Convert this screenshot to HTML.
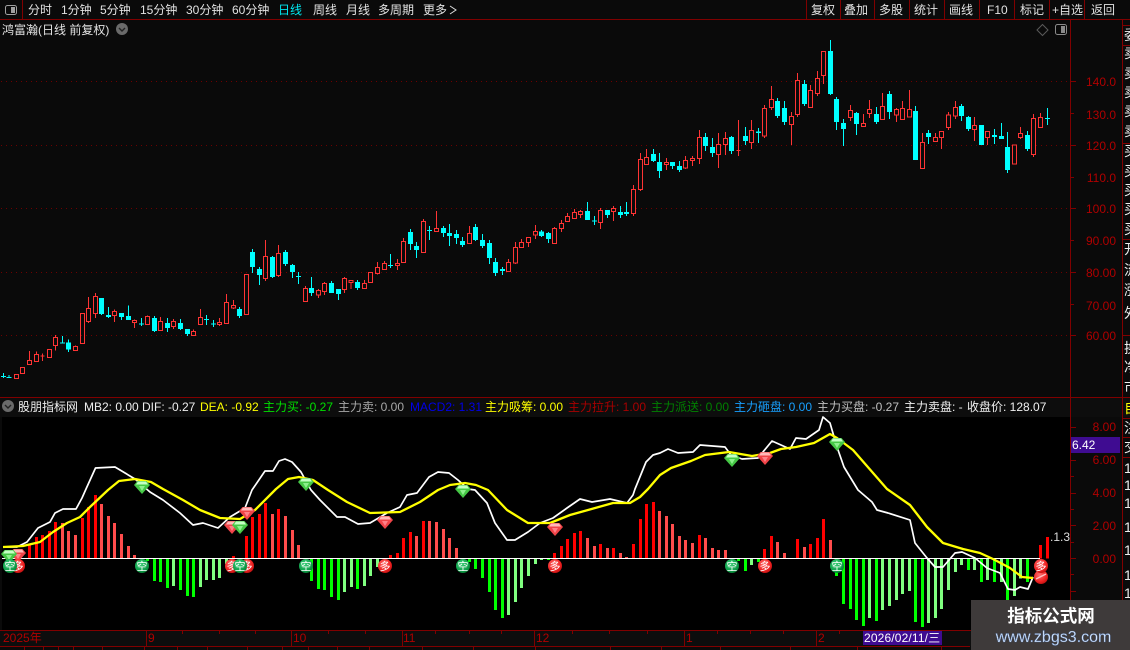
<!DOCTYPE html>
<html><head><meta charset="utf-8"><title>K线</title>
<style>
html,body{margin:0;padding:0;background:#0a0a0a;width:1130px;height:650px;overflow:hidden}
svg{display:block;position:absolute;left:0;top:0}
text{font-family:"Liberation Sans","WenQuanYi Zen Hei","Noto Sans CJK SC",sans-serif;font-size:12px;white-space:pre}
.tb text{fill:#e2e2e2}
.ax text{fill:#b00000;text-anchor:end}
.sd text{fill:#eee;font-size:14px}
.ball{font-size:11px;fill:#fff;text-anchor:middle}
</style></head><body>
<svg width="1130" height="650" viewBox="0 0 1130 650" xmlns="http://www.w3.org/2000/svg">
<defs>
<radialGradient id="gr" cx=".4" cy=".35" r=".7"><stop offset="0" stop-color="#3ed07a"/><stop offset=".7" stop-color="#0fa04a"/><stop offset="1" stop-color="#067a30"/></radialGradient>
<radialGradient id="rd" cx=".4" cy=".35" r=".7"><stop offset="0" stop-color="#ff7070"/><stop offset=".7" stop-color="#ee2020"/><stop offset="1" stop-color="#b81010"/></radialGradient>
<g id="gg"><path d="M-4.5 -6H4.5L8 -2L0 7L-8 -2Z" fill="#46c846"/><path d="M-4 -5.5H4L6 -2.5H-6Z" fill="#c4ffc4"/><path d="M-3 -1H3L0 4Z" fill="#8cf08c"/></g>
<g id="rg"><path d="M-4.5 -6H4.5L8 -2L0 7L-8 -2Z" fill="#f04448"/><path d="M-4 -5.5H4L6 -2.5H-6Z" fill="#ffb8b8"/><path d="M-3 -1H3L0 4Z" fill="#ff8088"/></g>
<clipPath id="sc"><rect x="1123" y="20" width="7" height="630"/></clipPath>
</defs>

<rect width="1130" height="650" fill="#0a0a0a"/>

<!-- toolbar -->
<g stroke="#800000" fill="none" shape-rendering="crispEdges">
<path d="M0 19.5H1130M22.5 0V19M806.5 0V19M840.5 0V19M874.5 0V19M909.5 0V19M944.5 0V19M979.5 0V19M1014.5 0V19M1049.5 0V19M1084.5 0V19"/>
</g>
<rect x="5.5" y="5.5" width="11" height="9" rx="2" fill="none" stroke="#a0a0a0"/><rect x="11" y="7" width="4" height="6" fill="#a0a0a0"/>
<g class="tb">
<text x="28" y="14">分时</text><text x="61" y="14">1分钟</text><text x="100" y="14">5分钟</text><text x="140" y="14">15分钟</text><text x="186" y="14">30分钟</text><text x="232" y="14">60分钟</text>
<text x="278" y="14" style="fill:#00e8f0">日线</text><text x="313" y="14">周线</text><text x="346" y="14">月线</text><text x="378" y="14">多周期</text><text x="423" y="14">更多</text>
<text x="811" y="14">复权</text><text x="844" y="14">叠加</text><text x="879" y="14">多股</text><text x="914" y="14">统计</text><text x="949" y="14">画线</text><text x="987" y="14">F10</text><text x="1020" y="14">标记</text><text x="1052" y="14">+自选</text><text x="1091" y="14">返回</text>
</g>
<path d="M450 6L456 10L450 14" fill="none" stroke="#ddd"/>

<!-- title -->
<text x="2" y="34" fill="#e2e2e2">鸿富瀚(日线 前复权)</text>
<circle cx="122" cy="29" r="6" fill="#6a6a6a"/><path d="M119 28L122 31L125 28" fill="none" stroke="#222" stroke-width="1.4"/>
<path d="M1042.5 24.5L1048 30L1042.5 35.5L1037 30Z" fill="none" stroke="#5a5a5a"/>
<rect x="1055.5" y="24.5" width="11" height="10" rx="2" fill="none" stroke="#8a8a8a"/><rect x="1061" y="26" width="4" height="7" fill="#8a8a8a"/>

<!-- grid -->
<g stroke="#6e0000" stroke-dasharray="1 4" shape-rendering="crispEdges">
<path d="M1 81.5H1070M1 145.5H1070M1 208.5H1070M1 272.5H1070M1 335.5H1070"/>
</g>

<!-- candles -->
<g shape-rendering="crispEdges" fill="none">
<g transform="matrix(.33333 0 0 .33333 0 200)">
<path stroke="#00ffff" stroke-width="3" d="M10 519V534M27 525V533M187 408V430M205 418V456M304 294V345M325 321V354M364 339V360M385 316V360M424 354V378M463 348V396M502 354V396M541 357V390M562 387V408M619 345V375M640 360V381M718 321V354M757 147V219M778 201V255M817 168V234M856 150V198M877 192V234M895 216V252M934 231V288M994 243V279M1015 267V300"/>
<path stroke="#00ffff" stroke-width="15" d="M10 528V531M27 531V534M187 427V430M205 427V449M304 294V342M325 345V351M364 339V351M385 348V360M424 370V373M463 354V393M502 369V384M541 369V387M562 387V402M619 357V360M640 370V373M718 327V348M757 156V201M778 207V225M817 171V231M856 156V192M877 195V216M895 228V231M934 264V279M994 249V279M1015 267V282"/>
<path stroke="#ff3434" stroke-width="3" d="M43 523H55V536H43ZM61 502H73V521H61ZM88 453V481M82 481H94V494H82ZM109 454V463M103 463H115V485H103ZM127 460V483M121 468H133M142 448H154V473H142ZM166 405V412M160 412H172V437H160ZM166 437V452M226 436V439M220 439H232V452H220ZM241 340H253V431H241ZM265 291V325M259 325H271V365H259ZM265 365V369M286 279V289M280 289H292V341H280ZM286 341V354M343 328V334M337 334H349V347H337ZM343 347V366M403 358V361M397 361H409V368H397ZM403 368V384M442 346V349M436 349H448V374H436ZM481 351V364M475 364H487V392H475ZM520 357V364M514 364H526V380H514ZM520 380V387M580 388V394M574 394H586V407H574ZM601 327V352M595 352H607V374H595ZM658 354V367M652 367H664V374H652ZM658 374V378M679 282V307M673 307H685V371H673ZM700 300V316M694 316H706V324H694ZM700 324V327M733 223H745V344H733ZM796 120V169M790 169H802V236H790ZM796 236V243M835 135V160M829 160H841V227H829ZM835 227V231M916 258V265M910 265H922V305H910ZM955 267V271M949 271H961V285H949ZM955 285V294M973 246V250M967 250H979V275H967ZM973 275V285M1033 231V235M1027 235H1039V269H1027ZM1033 269V279"/>
</g>
<g transform="matrix(.33333 0 0 .33333 350 130)">
<path stroke="#00ffff" stroke-width="3" d="M22 450V480M121 372V414M181 297V360M199 336V384M238 288V330M280 288V321M298 282V348M319 300V342M337 321V351M376 282V333M397 312V354M418 330V402M436 384V438M457 411V435M574 300V321M595 306V339M712 216V270M733 258V285M772 240V264M811 228V264M829 216V258M910 57V96M928 69V144M967 96V117M988 93V126"/>
<path stroke="#00ffff" stroke-width="15" d="M22 456V474M121 405V408M181 306V342M199 348V360M238 300V303M280 294V309M298 309V318M319 312V324M337 333V345M376 291V330M397 330V348M418 339V384M436 396V429M457 417V423M574 304V318M595 309V327M712 243V270M733 272V275M772 240V255M811 246V255M829 246V252M910 72V93M928 96V123M967 96V108M988 108V120"/>
<path stroke="#ff3434" stroke-width="3" d="M-3 451H9V457H-3ZM3 457V477M43 450V460M37 460H49V476H37ZM55 427H67V458H55ZM82 396V412M76 412H88V431H76ZM82 431V434M103 393V400M97 400H109V419H97ZM142 387V400M136 400H148V407H136ZM142 407V420M160 324V334M154 334H166V398H154ZM220 267V274M214 274H226V368H214ZM259 243V295M253 295H265V305H253ZM358 288V310M352 310H364V341H352ZM475 387V397M469 397H481V425H469ZM496 336V352M490 352H502V399H490ZM496 399V402M514 327V337M508 337H520V353H508ZM529 322H541V338H529ZM535 338V351M556 285V304M550 304H562V315H550ZM556 315V327M613 291V295M607 295H619V341H607ZM634 270V280M628 280H640V296H628ZM634 296V306M652 249V259M646 259H658V275H646ZM673 237V247M667 247H679V266H667ZM691 240V244M685 244H697V254H685ZM691 254V264M751 234V241M745 241H757V278H745ZM751 278V297M790 228V235M784 235H796V245H784ZM790 245V273M850 165V178M844 178H856V251H844ZM850 251V258M871 69V88M865 88H877V179H865ZM871 179V183M889 57V82M883 82H895V104H883ZM949 84V97M943 97H955V104H943ZM949 104V120M1006 78V91M1000 91H1012V114H1000ZM1006 114V117M1027 78V85M1021 85H1033V92H1021ZM1027 92V108"/>
</g>
<g transform="matrix(.33333 0 0 .33333 690 30)">
<path stroke="#00ffff" stroke-width="3" d="M46 309V363M67 324V381M124 318V372M166 291V345M205 294V339M262 204V264M283 213V285M343 150V228M421 30V195M439 201V300M460 267V348M499 246V315M559 231V282M598 183V267M676 228V390M715 300V342M814 222V273M835 258V303M874 285V345M913 297V342M934 279V327M952 306V429M1012 303V363M1072 234V285"/>
<path stroke="#00ffff" stroke-width="15" d="M46 321V348M67 351V369M124 321V363M166 318V333M205 304V309M262 213V258M283 234V276M343 162V222M421 63V192M439 207V276M460 279V297M499 249V282M559 252V276M598 192V246M676 243V390M715 309V321M814 228V258M835 261V297M874 285V345M913 315V321M934 318V327M952 351V420M1012 315V357M1072 264V267"/>
<path stroke="#ff3434" stroke-width="3" d="M28 300V322M22 322H34V386H22ZM28 386V402M85 309V343M79 343H91V374H79ZM85 374V414M106 306V325M100 325H112V344H100ZM106 344V375M145 270V378M139 361H151M184 270V301M178 301H190V338H178ZM184 338V357M223 225V235M217 235H229V318H217ZM223 318V324M244 168V208M238 208H250V233H238ZM244 233V240M304 246V259M298 259H310V284H298ZM304 284V345M322 129V151M316 151H328V254H316ZM322 254V261M361 165V181M355 181H367V233H355ZM382 123V145M376 145H388V190H376ZM382 190V198M394 64H406V137H394ZM400 137V162M481 225V241M475 241H487V263H475ZM481 263V273M520 252V280M514 280H526V290H514ZM538 210V238M532 238H544V250H532ZM538 250V264M577 189V229M571 229H583V269H571ZM619 234V238M613 238H625V255H613ZM619 255V276M637 213V235M631 235H643V269H631ZM658 180V238M652 238H664V261H652ZM697 309V337M691 337H703V416H691ZM736 309V322M730 322H742V335H730ZM748 304H760V323H748ZM754 323V357M775 246V255M769 255H781V293H769ZM775 293V300M796 213V232M790 232H802V258H790ZM796 258V267M853 261V286M847 286H859V299H847ZM853 299V333M886 304H898V323H886ZM892 323V345M967 345H979V402H967ZM991 291V310M985 310H997V323H985ZM991 323V327M1030 252V265M1024 265H1036V374H1024ZM1030 374V381M1051 249V262M1045 262H1057V293H1045Z"/>
</g>
</g>

<!-- lower panel backgrounds -->
<rect x="0" y="398" width="1130" height="19" fill="#0d0d0d"/>
<rect x="2" y="417" width="1068" height="213" fill="#000"/>

<!-- MACD bars -->
<g shape-rendering="crispEdges" fill="none" stroke-width="9">
<g transform="matrix(.33333 0 0 .33333 0 490)">
<path stroke="#ff0000" d="M88 205V165M109 205V141M127 205V135M148 205V123M166 205V96M247 205V84M265 205V51M286 205V15M700 205V198M739 205V138M757 205V81M778 205V72M796 205V39M835 205V57M1171 205V195M1192 205V189"/>
<path stroke="#ff4c4c" d="M187 205V99M205 205V123M226 205V135M304 205V42M325 205V78M343 205V99M364 205V132M385 205V168M403 205V195M817 205V72M856 205V78M877 205V120M895 205V165"/>
<path stroke="#00ff00" d="M442 205V213M463 205V273M481 205V276M502 205V294M541 205V300M562 205V318M580 205V321M934 205V273M955 205V297M973 205V300M994 205V321M1015 205V330M1072 205V297"/>
<path stroke="#80ff80" d="M520 205V288M601 205V291M619 205V270M640 205V270M658 205V264M679 205V222M1033 205V306M1054 205V291M1093 205V288M1111 205V258M1132 205V231"/>
</g>
<g transform="matrix(.33333 0 0 .33333 400 490)">
<path stroke="#ff0000" d="M10 205V144M31 205V126M70 205V93M463 205V189M484 205V168M502 205V147M523 205V129M541 205V123M601 205V162M640 205V174M700 205V162M721 205V87M739 205V42M760 205V36M898 205V135M1093 205V177M1114 205V138M1192 205V147"/>
<path stroke="#ff4c4c" d="M49 205V138M88 205V93M109 205V96M130 205V117M148 205V144M169 205V174M562 205V144M583 205V168M622 205V174M661 205V189M679 205V201M778 205V63M799 205V78M817 205V102M838 205V138M856 205V150M877 205V159M916 205V144M937 205V174M955 205V180M976 205V180M1132 205V156M1153 205V189M1174 205V204"/>
<path stroke="#00ff00" d="M208 205V216M226 205V237M247 205V264M268 205V306M286 205V360M307 205V384M445 205V210M1015 205V213M1036 205V243M1075 205V216"/>
<path stroke="#80ff80" d="M325 205V375M346 205V336M364 205V294M385 205V258M406 205V222M424 205V210M1054 205V225"/>
</g>
<g transform="matrix(.33333 0 0 .33333 800 490)">
<path stroke="#ff0000" d="M31 205V162M52 205V144M70 205V87M721 205V165M742 205V141"/>
<path stroke="#ff4c4c" d="M13 205V171M91 205V150"/>
<path stroke="#00ff00" d="M109 205V258M130 205V342M151 205V357M169 205V390M190 205V408M229 205V393M346 205V396M367 205V411M505 205V240M544 205V276M583 205V276M622 205V330M682 205V276"/>
<path stroke="#80ff80" d="M208 205V384M247 205V360M268 205V348M289 205V330M307 205V312M328 205V303M385 205V399M406 205V384M424 205V357M445 205V300M466 205V246M484 205V225M523 205V240M562 205V270M604 205V276M643 205V318M661 205V265"/>
</g>
</g>
<path d="M2 558.5H1040" stroke="#fff" shape-rendering="crispEdges"/>

<!-- DIF / DEA -->
<polyline fill="none" stroke="#fff" stroke-width="1.7" stroke-linejoin="round" points="3,547 17,547 27,542 38,528 50,522 55,513 63,509 76,509 82,498 86,489 95.5,468 115,467 135,479 150,492 163,500 180,513 193,525 203,523 218,528 230,517 245,508 252,490 265,471 273,471 279,461 285,459 292,462 301,472 311,490 320,500 337,517 345,517 358,524 370,523 387,513 400,507 407,495 417,493 420,489 429,477 438,472 449,473 458,480 468,489 475,490 487,503 495,523 507,540 515,540 528,532 540,523 553,518 567,508 580,499 592,502 610,499 627,503 633,495 635,489 646,462 653,455 660,453 668,449 678,453 693,452 700,445 725,447 731,455 742,459 758,458 772,441 790,449 796,438 806,439 819,430 823,417 830,423 837,447 844,467 858,490 872,502 877,510 888,513 910,520 915,543 927,558 935,567 943,567 955,553 962,552 975,558 987,568 1000,573 1008,589 1015,590 1020,587 1028,589 1033,577"/>
<polyline fill="none" stroke="#ffff00" stroke-width="2.3" stroke-linejoin="round" points="3,547 23,546 40,542 53,532 67,523 80,517 90,507 108,490 119,481 135,479 151,482 163,489 183,500 200,510 220,518 240,519 255,510 276,489 288,479 299,477 313,480 328,490 347,502 370,513 400,512 420,502 438,490 450,485 465,483 476,485 488,490 507,510 528,523 550,523 570,515 588,510 613,503 630,503 640,497 648,489 660,475 671,468 691,461 705,455 729,452 752,456 770,453 781,449 796,447 814,443 830,434 837,438 853,450 887,489 910,505 927,527 943,543 963,549 980,553 993,559 1010,568 1022,577 1033,578"/>

<!-- signals -->
<use href="#rg" x="18" y="555"/><use href="#gg" x="9" y="556"/>
<use href="#gg" x="142" y="487"/><use href="#rg" x="247" y="513"/><use href="#rg" x="232" y="527"/><use href="#gg" x="240" y="527"/>
<use href="#gg" x="306" y="484"/><use href="#rg" x="385" y="522"/><use href="#gg" x="463" y="491"/><use href="#rg" x="555" y="529"/>
<use href="#gg" x="732" y="460"/><use href="#rg" x="765" y="458"/><use href="#gg" x="837" y="444"/>

<circle cx="18" cy="566" r="7" fill="url(#rd)"/><text class="ball" x="18" y="570">多</text>
<circle cx="10" cy="566" r="7" fill="url(#gr)"/><text class="ball" x="10" y="570">空</text>
<circle cx="142" cy="566" r="7" fill="url(#gr)"/><text class="ball" x="142" y="570">空</text>
<circle cx="232" cy="566" r="7" fill="url(#rd)"/><text class="ball" x="232" y="570">多</text>
<circle cx="247" cy="566" r="7" fill="url(#rd)"/><text class="ball" x="247" y="570">多</text>
<circle cx="240" cy="566" r="7" fill="url(#gr)"/><text class="ball" x="240" y="570">空</text>
<circle cx="306" cy="566" r="7" fill="url(#gr)"/><text class="ball" x="306" y="570">空</text>
<circle cx="385" cy="566" r="7" fill="url(#rd)"/><text class="ball" x="385" y="570">多</text>
<circle cx="463" cy="566" r="7" fill="url(#gr)"/><text class="ball" x="463" y="570">空</text>
<circle cx="555" cy="566" r="7" fill="url(#rd)"/><text class="ball" x="555" y="570">多</text>
<circle cx="732" cy="566" r="7" fill="url(#gr)"/><text class="ball" x="732" y="570">空</text>
<circle cx="765" cy="566" r="7" fill="url(#rd)"/><text class="ball" x="765" y="570">多</text>
<circle cx="837" cy="566" r="7" fill="url(#gr)"/><text class="ball" x="837" y="570">空</text>
<circle cx="1041" cy="577" r="7" fill="url(#rd)"/><path d="M1036 579L1046 574" stroke="#ffc0c0" stroke-width="1.5"/>
<circle cx="1041" cy="566" r="7" fill="url(#rd)"/><text class="ball" x="1041" y="570">多</text>
<text x="1050" y="541" fill="#ddd">.1.3</text>

<!-- indicator header -->
<path d="M0 397.5H1130" stroke="#800000" shape-rendering="crispEdges"/>
<circle cx="8" cy="406" r="6" fill="#6a6a6a"/><path d="M5 405L8 408L11 405" fill="none" stroke="#222" stroke-width="1.4"/>
<text x="18" y="411" fill="#eee">股朋指标网</text>
<text x="84" y="411" fill="#eee">MB2: 0.00</text>
<text x="142" y="411" fill="#eee">DIF: -0.27</text>
<text x="200" y="411" fill="#ffff00">DEA: -0.92</text>
<text x="263" y="411" fill="#00e000">主力买: -0.27</text>
<text x="338" y="411" fill="#a8a8a8">主力卖: 0.00</text>
<text x="410" y="411" fill="#0000e8">MACD2: 1.31</text>
<text x="485" y="411" fill="#ffff00">主力吸筹: 0.00</text>
<text x="568" y="411" fill="#a80000">主力拉升: 1.00</text>
<text x="651" y="411" fill="#008000">主力派送: 0.00</text>
<text x="734" y="411" fill="#18a0ff">主力砸盘: 0.00</text>
<text x="817" y="411" fill="#c0c0c0">主力买盘: -0.27</text>
<text x="904" y="411" fill="#f0f0f0">主力卖盘: -</text>
<text x="967" y="411" fill="#f0f0f0">收盘价: 128.07</text>

<!-- right axis -->
<g stroke="#800000" fill="none" shape-rendering="crispEdges">
<path d="M1070.5 20V630M1122.5 20V650"/>
<path d="M1070 81.5H1076M1070 113.5H1074M1070 145.5H1076M1070 177.5H1074M1070 208.5H1076M1070 240.5H1074M1070 272.5H1076M1070 304.5H1074M1070 335.5H1076"/>
<path d="M1070 427.5H1076M1070 443.5H1074M1070 460.5H1076M1070 476.5H1074M1070 493.5H1076M1070 509.5H1074M1070 525.5H1076M1070 542.5H1074M1070 558.5H1076M1070 574.5H1074M1070 591.5H1076M1070 607.5H1074M1070 624.5H1076"/>
<path d="M1122 25.5H1130M1122 45.5H1130M1122 143.5H1130M1122 239.5H1130M1122 335.5H1130M1122 418.5H1130M1122 437.5H1130M1122 457.5H1130"/>
</g>
<g class="ax">
<text x="1116" y="86">140.0</text><text x="1116" y="119">130.0</text><text x="1116" y="150">120.0</text><text x="1116" y="182">110.0</text><text x="1116" y="213">100.0</text><text x="1116" y="245">90.00</text><text x="1116" y="277">80.00</text><text x="1116" y="310">70.00</text><text x="1116" y="340">60.00</text>
<text x="1116" y="431">8.00</text><text x="1116" y="464">6.00</text><text x="1116" y="497">4.00</text><text x="1116" y="530">2.00</text><text x="1116" y="563">0.00</text>
</g>
<rect x="1071" y="437" width="49" height="16" fill="#3f0c91"/>
<text x="1072" y="449" fill="#fff">6.42</text>

<!-- sidebar -->
<g class="sd" clip-path="url(#sc)">
<text x="1124" y="40">委</text>
<text x="1124" y="58">卖</text><text x="1124" y="78">卖</text><text x="1124" y="97">卖</text><text x="1124" y="116">卖</text><text x="1124" y="136">卖</text>
<text x="1124" y="156">买</text><text x="1124" y="176">买</text><text x="1124" y="195">买</text><text x="1124" y="214">买</text><text x="1124" y="234">买</text>
<text x="1124" y="254">开</text><text x="1124" y="275">流</text><text x="1124" y="295">涨</text><text x="1124" y="318">外</text>
<text x="1124" y="353">换</text><text x="1124" y="372">净</text><text x="1124" y="392">市</text>
<text x="1124" y="413" style="fill:#ffff00">自</text><text x="1124" y="433">注</text><text x="1124" y="452">交</text>
<text x="1124" y="473">1</text><text x="1124" y="490">1</text><text x="1124" y="508">1</text><text x="1124" y="532">1</text><text x="1124" y="555">1</text><text x="1124" y="580">1</text><text x="1124" y="598">1</text>
</g>

<!-- time axis -->
<rect x="0" y="631" width="1070" height="15" fill="#0d0d0d"/>
<g stroke="#800000" fill="none" shape-rendering="crispEdges">
<path d="M0 630.5H1070M0 646.5H970"/>
<path d="M146.5 631V646M291.5 631V646M402.5 631V646M534.5 631V646M684.5 631V646M816.5 631V646"/>
<path d="M182.5 631V634M219.5 631V634M255.5 631V634M328.5 631V634M365.5 631V634M435.5 631V634M469.5 631V634M501.5 631V634M572.5 631V634M609.5 631V634M647.5 631V634M717.5 631V634M750.5 631V634M783.5 631V634M839.5 631V634"/>
<path d="M24.5 646V650M43.5 646V650M58.5 646V650M73.5 646V650M102.5 646V650M144.5 646V650M177.5 646V650M207.5 646V650M247.5 646V650M282.5 646V650M308.5 646V650M337.5 646V650M369.5 646V650M422.5 646V650M473.5 646V650M535.5 646V650M610.5 646V650M661.5 646V650M720.5 646V650M790.5 646V650M857.5 646V650M941.5 646V650"/>
</g>
<g fill="#b00000">
<text x="3" y="642">2025年</text><text x="148" y="642">9</text><text x="293" y="642">10</text><text x="403" y="642">11</text><text x="536" y="642">12</text><text x="686" y="642">1</text><text x="818" y="642">2</text>
</g>
<rect x="863" y="631" width="79" height="14" fill="#3f0c91"/>
<text x="864" y="642" fill="#fff" style="letter-spacing:.15px">2026/02/11/三</text>

<!-- watermark -->
<rect x="971" y="600" width="159" height="50" fill="#3e3a3a"/>
<text x="1051" y="622" fill="#fff" text-anchor="middle" style="font-size:17.5px;font-weight:bold;font-family:'Liberation Sans','Noto Sans CJK SC',sans-serif">指标公式网</text>
<text x="1053.5" y="642" fill="#d6e6fa" text-anchor="middle" style="font-size:16px;font-weight:normal;stroke:#4a70b0;stroke-width:.3px">www.zbgs3.com</text>
</svg>
</body></html>
